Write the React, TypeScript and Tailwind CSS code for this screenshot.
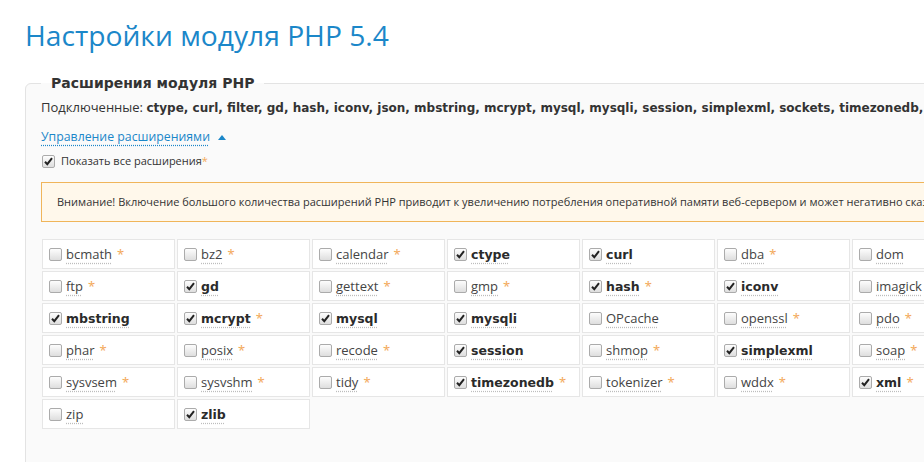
import React from 'react';

type Ext = { name: string; on: boolean; star: boolean };

const rows: Ext[][] = [
  [
    { name: 'bcmath', on: false, star: true },
    { name: 'bz2', on: false, star: true },
    { name: 'calendar', on: false, star: true },
    { name: 'ctype', on: true, star: false },
    { name: 'curl', on: true, star: false },
    { name: 'dba', on: false, star: true },
    { name: 'dom', on: false, star: false },
  ],
  [
    { name: 'ftp', on: false, star: true },
    { name: 'gd', on: true, star: false },
    { name: 'gettext', on: false, star: true },
    { name: 'gmp', on: false, star: true },
    { name: 'hash', on: true, star: true },
    { name: 'iconv', on: true, star: false },
    { name: 'imagick', on: false, star: false },
  ],
  [
    { name: 'mbstring', on: true, star: false },
    { name: 'mcrypt', on: true, star: true },
    { name: 'mysql', on: true, star: false },
    { name: 'mysqli', on: true, star: false },
    { name: 'OPcache', on: false, star: false },
    { name: 'openssl', on: false, star: true },
    { name: 'pdo', on: false, star: true },
  ],
  [
    { name: 'phar', on: false, star: true },
    { name: 'posix', on: false, star: true },
    { name: 'recode', on: false, star: true },
    { name: 'session', on: true, star: false },
    { name: 'shmop', on: false, star: true },
    { name: 'simplexml', on: true, star: false },
    { name: 'soap', on: false, star: true },
  ],
  [
    { name: 'sysvsem', on: false, star: true },
    { name: 'sysvshm', on: false, star: true },
    { name: 'tidy', on: false, star: true },
    { name: 'timezonedb', on: true, star: true },
    { name: 'tokenizer', on: false, star: true },
    { name: 'wddx', on: false, star: true },
    { name: 'xml', on: true, star: true },
  ],
  [
    { name: 'zip', on: false, star: false },
    { name: 'zlib', on: true, star: false },
  ],
];

const sans = "font-['Open_Sans','Liberation_Sans',sans-serif]";
const bold = "font-['DejaVu_Sans','Liberation_Sans',sans-serif] font-bold";

function Box({ checked }: { checked: boolean }) {
  return (
    <span className="relative inline-block w-[13px] h-[13px] shrink-0 rounded-[2px] border border-[#ababab] bg-gradient-to-b from-[#fdfdfd] to-[#dedede]">
      {checked && (
        <svg viewBox="0 0 13 13" className="absolute -left-px -top-px w-[13px] h-[13px]">
          <path d="M3 6.8 L5.3 9.2 L10 3.2" fill="none" stroke="#222" strokeWidth="2" />
        </svg>
      )}
    </span>
  );
}

function Star() {
  return <span className="text-[#f3a95b] ml-[5px]">*</span>;
}

export default function App() {
  return (
    <div className="w-[924px] h-[462px] overflow-hidden bg-white text-[#333]">
      <div className="w-[1100px] pl-[25px]">
        <h1 className={`${sans} text-[28.2px] leading-none text-[#1b87c9] pt-[21px]`}>
          Настройки модуля PHP 5.4
        </h1>

        <fieldset className="mt-[26px] border border-[#e3e3e3] rounded-[6px] bg-[#fafafa] pl-[15px] pb-[40px]">
          <legend className={`${bold} text-[14px] px-[10px] text-[#333] leading-[16px]`}>
            Расширения модуля PHP
          </legend>

          <div className="mt-[7px] text-[13px] leading-[18px] whitespace-nowrap">
            <span className={sans}>Подключенные: </span>
            <span className={`${bold} text-[12px]`}>
              ctype, curl, filter, gd, hash, iconv, json, mbstring, mcrypt, mysql, mysqli, session, simplexml, sockets, timezonedb, xml, zlib
            </span>
          </div>

          <div className="mt-[11px] flex items-center gap-[8px]">
            <span className={`${sans} text-[12.3px] leading-[18px] text-[#1b87c9] underline decoration-dotted decoration-[#1b87c9] underline-offset-[4px]`}>
              Управление расширениями
            </span>
            <svg width="8" height="5" viewBox="0 0 8 5" className="mt-[1px]">
              <path d="M0 5 L4 0 L8 5 Z" fill="#1b87c9" />
            </svg>
          </div>

          <div className="mt-[8px] flex items-center gap-[6px] pl-[1px]">
            <Box checked />
            <span className={`${sans} text-[11px] leading-[14px]`}>
              Показать все расширения<span className="text-[#f3a95b]">*</span>
            </span>
          </div>

          <div className={`${sans} mt-[14px] border border-[#f0b55a] bg-[#fff8eb] h-[40px] flex items-center pl-[15px] text-[11px] whitespace-nowrap`}>
            Внимание! Включение большого количества расширений PHP приводит к увеличению потребления оперативной памяти веб-сервером и может негативно сказаться на производительности сайта.
          </div>

          <div className="mt-[17px] pl-[1px] grid grid-cols-[repeat(7,133px)] gap-x-[2px] gap-y-[2px]">
            {rows.flat().map((e) => (
              <div
                key={e.name}
                className="h-[30px] bg-white border border-[#e6e6e6] flex items-center pl-[6px] gap-[4px]"
              >
                <Box checked={e.on} />
                <span className="text-[13px] leading-[18px] whitespace-nowrap">
                  <span
                    className={`${e.on ? `${bold} text-[12.5px] text-[#2b2b2b]` : `${sans} text-[#444]`} underline decoration-dotted decoration-[#bdbdbd] underline-offset-[4px]`}
                  >
                    {e.name}
                  </span>
                  {e.star && <Star />}
                </span>
              </div>
            ))}
          </div>
        </fieldset>
      </div>
    </div>
  );
}
